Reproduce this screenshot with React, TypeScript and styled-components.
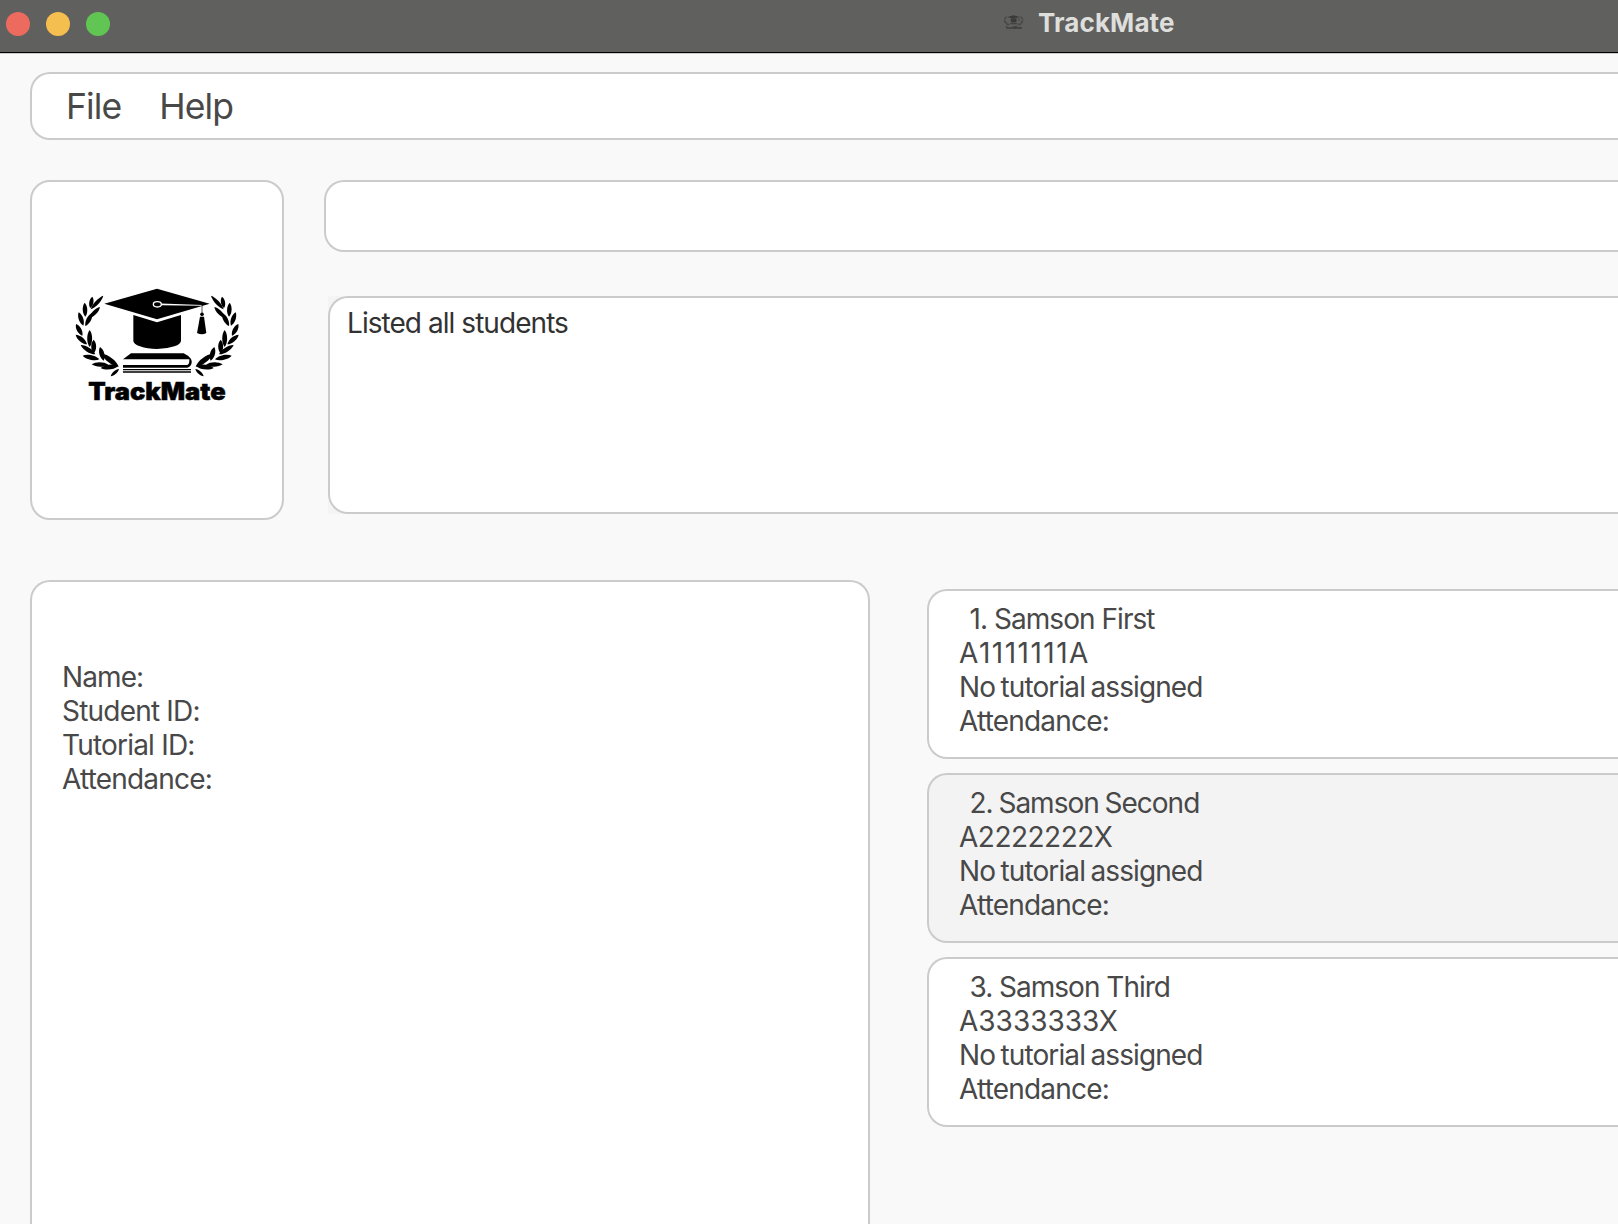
import React from "react";
import styled, { createGlobalStyle } from "styled-components";

const GlobalStyle = createGlobalStyle`
  * { box-sizing: border-box; }
  html, body { margin: 0; padding: 0; overflow: hidden; }
  body { background: #f9f9f9; font-family: Inter, "Liberation Sans", sans-serif; }
`;

const Window = styled.div`
  width: 1618px;
  height: 1224px;
  overflow: hidden;
  display: flex;
  flex-direction: column;
  background: #f9f9f9;
  color: #484848;
`;

const TitleBar = styled.header`
  display: flex;
  align-items: center;
  flex: none;
  height: 54px;
  padding: 0 0 6px 6px;
  background: #60605e;
  border-bottom: 1px solid #cfcfcf;
  box-shadow: inset 0 -1px 0 #000;
`;

const Lights = styled.div`
  display: flex;
  gap: 16px;
  width: 996px;
`;

const Light = styled.span<{ $color: string }>`
  width: 24px;
  height: 24px;
  border-radius: 50%;
  background: ${(p) => p.$color};
`;

const WindowTitle = styled.div`
  display: flex;
  align-items: center;
  gap: 12px;
  height: 32px;
  margin-top: -1px;
`;

const TitleIcon = styled.span`
  display: flex;
  padding-bottom: 2px;
`;

const TitleText = styled.span`
  font-size: 26px;
  font-weight: 700;
  line-height: 32px;
  letter-spacing: 0.1px;
  color: #dededd;
`;

const Content = styled.main`
  display: flex;
  flex-direction: column;
  flex: 1;
  padding: 18px 0 0 30px;
  min-height: 0;
`;

const Panel = styled.section`
  background: #fff;
  border: 2px solid #cbcbcb;
  border-radius: 20px;
`;

const OpenPanel = styled(Panel)`
  border-right: 0;
  border-top-right-radius: 0;
  border-bottom-right-radius: 0;
`;

const MenuBar = styled(OpenPanel)`
  display: flex;
  gap: 38px;
  height: 68px;
  padding: 11px 0 0 34px;
`;

const MenuItem = styled.span`
  font-size: 35.5px;
  line-height: 44px;
  letter-spacing: -0.9px;
`;

const TopRow = styled.div`
  display: flex;
  gap: 40px;
  height: 340px;
  margin-top: 40px;
`;

const LogoPanel = styled(Panel)`
  width: 254px;
  padding: 88px 0 0 28px;
`;

const Console = styled.div`
  display: flex;
  flex-direction: column;
  flex: 1;
  gap: 44px;
`;

const CommandBox = styled(OpenPanel)`
  height: 72px;
`;

const ResultFrame = styled.div`
  height: 218px;
  margin-left: 4px;
  background: #f4f4f4;
`;

const ResultBox = styled(OpenPanel)`
  height: 218px;
  padding: 8px 0 0 17px;
  color: #323232;
`;

const BottomRow = styled.div`
  display: flex;
  gap: 57px;
  flex: 1;
  margin-top: 60px;
  min-height: 0;
`;

const DetailPanel = styled(Panel)`
  width: 840px;
  padding: 78px 0 0 30px;
  border-bottom: 0;
  border-bottom-left-radius: 0;
  border-bottom-right-radius: 0;
`;

const StudentList = styled.div`
  display: flex;
  flex-direction: column;
  flex: 1;
  gap: 14px;
  padding-top: 9px;
`;

const Card = styled(OpenPanel)<{ $shaded: boolean }>`
  height: 170px;
  padding: 11px 0 0 30px;
  background: ${(p) => (p.$shaded ? "#f3f3f3" : "#fff")};
`;

const Line = styled.div<{ $track?: number; $word?: number; $indent?: number }>`
  font-size: 28px;
  line-height: 34px;
  white-space: pre;
  letter-spacing: ${(p) => p.$track ?? -0.8}px;
  word-spacing: ${(p) => p.$word ?? 0}px;
  padding-left: ${(p) => p.$indent ?? 0}px;
`;

type Leaf = [number, number, number, number, number];

/* base x, base y, tip x, tip y, width */
const leaves: Leaf[] = [
  [91, 114, 97, 80, 11],
  [92, 118, 130, 77, 10],
  [87, 145, 120, 111, 11],
  [76, 140, 74, 98, 12],
  [70, 167, 56, 127, 12],
  [76, 168, 97, 128, 12],
  [67, 197, 48, 162, 12],
  [89, 231, 89, 180, 13],
  [81, 223, 47, 194, 12],
  [106, 253, 62, 225, 12],
  [101, 250, 101, 209, 13],
  [118, 268, 68, 257, 12],
  [131, 272, 120, 231, 13],
  [145, 284, 95, 283, 12],
  [176, 290, 125, 251, 14],
  [175, 288, 122, 294, 13],
  [177, 297, 152, 319, 8],
];

const leafPath = ([bx, by, tx, ty, w]: Leaf) => {
  const dx = tx - bx;
  const dy = ty - by;
  const len = Math.hypot(dx, dy);
  const nx = (-dy / len) * w * 0.76;
  const ny = (dx / len) * w * 0.76;
  const at = (t: number, s: number) => `${bx + dx * t + nx * s} ${by + dy * t + ny * s}`;
  return `M${bx} ${by}C${at(0.25, 1)} ${at(0.75, 1)} ${tx} ${ty}C${at(0.75, -1)} ${at(0.25, -1)} ${bx} ${by}Z`;
};

const Laurel = () => (
  <>
    {leaves.map((l, i) => (
      <path key={i} d={leafPath(l)} />
    ))}
  </>
);

const Logo = ({ width, height, ink, paper }: { width: number; height: number; ink: string; paper: string }) => (
  <svg width={width} height={height} viewBox="0 0 600 450" fill={ink}>
    <Laurel />
    <g transform="translate(583 0) scale(-1 1)">
      <Laurel />
    </g>
    <path d="M133 101L291 56L449 101L291 148Z" />
    <path d="M220 135L291 157L363 135V212Q363 222 343 229Q320 237 291 237Q262 237 240 229Q220 222 220 212Z" />
    <ellipse cx="292" cy="103" rx="12" ry="8" fill={ink} stroke={paper} strokeWidth="4" />
    <path d="M304 100.500L426 105V107L304 105.500Z" fill={paper} />
    <path d="M425 105H427V130H425Z" />
    <circle cx="426" cy="133" r="5.500" />
    <path d="M420 140H432L439 189Q426 197 411 189Z" />
    <path d="M213 250H371Q384 255 393 268H189Z" />
    <path d="M384 260Q397 266 395 278Q393 290 382 293H189V285H382Q389 282 388 268Z" />
    <path d="M189 297H393V300.500H189ZM189 303.500H393V308H189Z" />
    <text
      x="85"
      y="389"
      fontFamily="Inter, sans-serif"
      fontWeight="900"
      fontSize="72"
      stroke={ink}
      strokeWidth="1.500"
      textLength="412"
      lengthAdjust="spacingAndGlyphs"
    >
      TrackMate
    </text>
  </svg>
);

const students = [
  { name: "1. Samson First", id: "A1111111A", nameTrack: -0.95, nameWord: 0, idTrack: 1.5 },
  { name: "2. Samson Second", id: "A2222222X", nameTrack: -1, nameWord: -1.1, idTrack: -0.5 },
  { name: "3. Samson Third", id: "A3333333X", nameTrack: -1, nameWord: 0, idTrack: 0 },
];

const fields = [
  { label: "Name:", track: -0.9 },
  { label: "Student ID:", track: -0.8 },
  { label: "Tutorial ID:", track: -0.8 },
  { label: "Attendance:", track: -0.8 },
];

export default function App() {
  return (
    <Window>
      <GlobalStyle />
      <TitleBar>
        <Lights>
          <Light $color="#ed6a5e" />
          <Light $color="#f5bf4f" />
          <Light $color="#61c554" />
        </Lights>
        <WindowTitle>
          <TitleIcon>
            <Logo width={24} height={18} ink="#3a3a39" paper="#60605e" />
          </TitleIcon>
          <TitleText>TrackMate</TitleText>
        </WindowTitle>
      </TitleBar>
      <Content>
        <MenuBar>
          <MenuItem>File</MenuItem>
          <MenuItem>Help</MenuItem>
        </MenuBar>
        <TopRow>
          <LogoPanel>
            <Logo width={200} height={150} ink="#000" paper="#fff" />
          </LogoPanel>
          <Console>
            <CommandBox />
            <ResultFrame>
              <ResultBox>
                <Line $track={-0.95}>Listed all students</Line>
              </ResultBox>
            </ResultFrame>
          </Console>
        </TopRow>
        <BottomRow>
          <DetailPanel>
            {fields.map((f) => (
              <Line key={f.label} $track={f.track}>
                {f.label}
              </Line>
            ))}
          </DetailPanel>
          <StudentList>
            {students.map((s, i) => (
              <Card key={s.id} $shaded={i % 2 === 1}>
                <Line $indent={10.5} $track={s.nameTrack} $word={s.nameWord}>
                  {s.name}
                </Line>
                <Line $track={s.idTrack}>{s.id}</Line>
                <Line $track={-0.9} $word={-1.5}>
                  No tutorial assigned
                </Line>
                <Line>Attendance:</Line>
              </Card>
            ))}
          </StudentList>
        </BottomRow>
      </Content>
    </Window>
  );
}
